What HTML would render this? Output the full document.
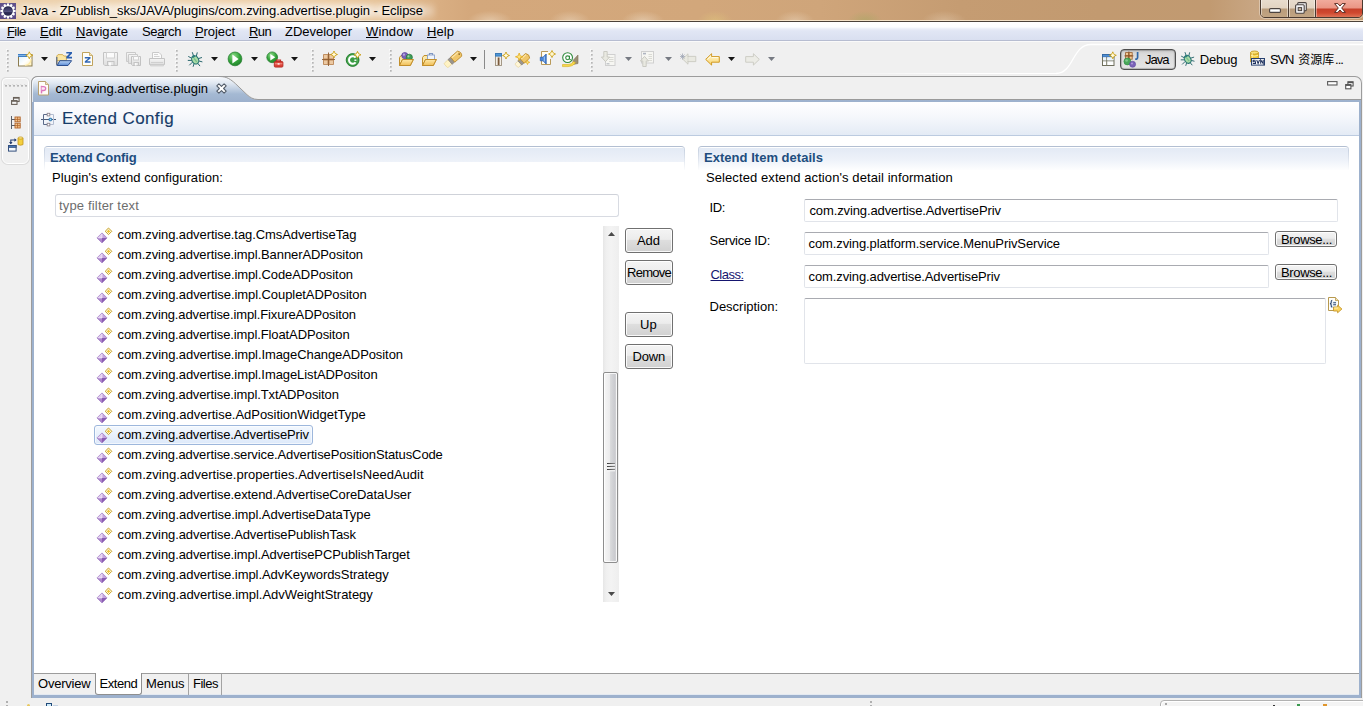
<!DOCTYPE html>
<html>
<head>
<meta charset="utf-8">
<title>Eclipse</title>
<style>
*{box-sizing:border-box;margin:0;padding:0}
html,body{width:1363px;height:706px;overflow:hidden;background:#f0f0f0}
body{position:relative;font-family:"Liberation Sans",sans-serif;font-size:13px;color:#000;line-height:16px}
.a{position:absolute}
svg{overflow:visible}
.t{position:absolute;white-space:nowrap;line-height:16px;height:16px}
u{text-decoration:underline;text-underline-offset:1px}
.dd{position:absolute;width:0;height:0;border-left:4px solid transparent;border-right:4px solid transparent;border-top:4px solid #111;top:57px}
.dd.g{border-top-color:#70727a}
.grip{position:absolute;top:49px;width:2px;height:21px;background:repeating-linear-gradient(180deg,#a9a9a9 0,#a9a9a9 2px,transparent 2px,transparent 4px)}
.sec{position:absolute;height:24px;border-radius:4px 4px 0 0;border-top:1px solid #b3bfd2;overflow:hidden}
.sec i{position:absolute;top:0;width:1px;height:24px;background:linear-gradient(180deg,#c3cede 0,#d9e0eb 10px,#ffffff 24px)}
.sec b{position:absolute;left:1px;right:1px;top:1px}
.inp{position:absolute;background:#fff;border:1px solid #d8dbe2;border-top-color:#cfd2d9;border-radius:3px}
.inp2{position:absolute;background:#fff;border:1px solid #e1e4ea;border-top-color:#a9abb1;border-radius:2px}
.btn{position:absolute;border:1px solid #707070;border-radius:3px;background:linear-gradient(180deg,#f4f4f4 0,#ececec 45%,#dedede 50%,#d1d1d1 100%);box-shadow:inset 0 0 0 1px rgba(255,255,255,.85)}
</style>
</head>
<body>
<svg width="0" height="0" style="position:absolute"><defs>
<linearGradient id="pg" x1="0" y1="0" x2="1" y2="1"><stop offset="0" stop-color="#ead9f4"/><stop offset=".5" stop-color="#b88fd2"/><stop offset="1" stop-color="#8a5cb2"/></linearGradient>
<g id="ext"><path d="M6 5.9 L1 10.9 H6Z" fill="#e2cdf1"/><path d="M6 5.9 L11 10.9 H6Z" fill="#c6a3df"/><path d="M1 10.9 L6 15.9 V10.9Z" fill="#ad85cd"/><path d="M11 10.9 L6 15.9 V10.9Z" fill="#8c5fb4"/><path d="M6 5.9 L11 10.9 L6 15.9 L1 10.9 Z" fill="none" stroke="#9b76be" stroke-width=".7" stroke-linejoin="round"/><path d="M6 7 V10.9 H2.4" stroke="#f6eefb" stroke-width=".8" fill="none" opacity=".85"/>
<path d="M12.5 1 L15.8 4.3 L12.5 7.6 L9.2 4.3 Z" fill="#fffbe2" stroke="#c6a028" stroke-width="1" stroke-linejoin="round"/><path d="M12.5 2.7 V5.9 M10.9 4.3 H14.1" stroke="#eec43a" stroke-width="1.2"/></g>
<linearGradient id="gY" x1="0" y1="0" x2="0" y2="1"><stop offset="0" stop-color="#fff3c4"/><stop offset="1" stop-color="#f1c860"/></linearGradient>
<linearGradient id="gFold" x1="0" y1="0" x2="0" y2="1"><stop offset="0" stop-color="#fde9a9"/><stop offset="1" stop-color="#f0bd55"/></linearGradient>
<radialGradient id="gRun" cx=".4" cy=".3" r=".8"><stop offset="0" stop-color="#8fdc8a"/><stop offset=".55" stop-color="#33a33a"/><stop offset="1" stop-color="#1d7a27"/></radialGradient>
<linearGradient id="gDis" x1="0" y1="0" x2="0" y2="1"><stop offset="0" stop-color="#f6f6f6"/><stop offset="1" stop-color="#dedede"/></linearGradient>
<linearGradient id="gBack" x1="0" y1="0" x2="0" y2="1"><stop offset="0" stop-color="#fff9dc"/><stop offset="1" stop-color="#fbd467"/></linearGradient>
<g id="star"><path d="M3.5 0 Q4 2.4 4.9 2.1 Q4.6 3 7 3.5 Q4.6 4 4.9 4.9 Q4 4.6 3.5 7 Q3 4.6 2.1 4.9 Q2.4 4 0 3.5 Q2.4 3 2.1 2.1 Q3 2.4 3.5 0 Z" fill="#ffe680" stroke="#c99f1c" stroke-width=".9" stroke-linejoin="round"/><path d="M3.5 1.7 V5.3 M1.7 3.5 H5.3" stroke="#fffdf0" stroke-width=".9"/></g>
<g id="ofold"><path d="M1.5 13.5 V5.5 L3 3.5 H6.5 L7.5 5 H12.5 V7.5" fill="#fbe7a6" stroke="#c28f2c" stroke-width="1" stroke-linejoin="round"/><path d="M1.5 13.5 L4.5 7.5 H15.3 L12.3 13.5 Z" fill="url(#gFold)" stroke="#c28f2c" stroke-width="1" stroke-linejoin="round"/></g>
</defs></svg>
<div class="a" id="title" style="left:0px;top:0px;width:1363px;height:22px;background:linear-gradient(90deg,#ecd0ab 0px,#edd0aa 200px,#ebcaa0 330px,#e3bd90 400px,#d9ae82 440px,#d4a87c 470px,#d2a77b 700px,#cfa57a 820px,#c59c72 960px,#c29a70 1100px,#c19a71 1210px,#c8a683 1255px,#c59c72 1363px)"></div>
<div class="a" style="left:468px;top:11px;width:44px;height:10px;background:radial-gradient(ellipse at 50% 100%,rgba(236,216,192,.6) 0,rgba(255,255,255,0) 72%)"></div>
<div class="a" style="left:550px;top:11px;width:40px;height:10px;background:radial-gradient(ellipse at 50% 100%,rgba(234,214,190,.55) 0,rgba(255,255,255,0) 72%)"></div>
<div class="a" style="left:622px;top:11px;width:42px;height:10px;background:radial-gradient(ellipse at 50% 100%,rgba(234,214,190,.6) 0,rgba(255,255,255,0) 72%)"></div>
<div class="a" style="left:698px;top:11px;width:34px;height:10px;background:radial-gradient(ellipse at 50% 100%,rgba(228,208,124,.4) 0,rgba(255,255,255,0) 72%)"></div>
<div class="a" style="left:776px;top:11px;width:38px;height:10px;background:radial-gradient(ellipse at 50% 100%,rgba(234,214,190,.5) 0,rgba(255,255,255,0) 72%)"></div>
<div class="a" style="left:848px;top:11px;width:34px;height:10px;background:radial-gradient(ellipse at 50% 100%,rgba(150,170,90,.4) 0,rgba(255,255,255,0) 72%)"></div>
<div class="a" style="left:922px;top:11px;width:44px;height:10px;background:radial-gradient(ellipse at 50% 100%,rgba(232,212,188,.4) 0,rgba(255,255,255,0) 72%)"></div>
<div class="a" style="left:14px;top:3px;width:420px;height:16px;background:radial-gradient(ellipse at 50% 50%,rgba(255,255,255,.75) 0,rgba(255,255,255,.55) 55%,rgba(255,255,255,0) 100%);filter:blur(3px)"></div>
<div class="a" style="left:0px;top:20px;width:1363px;height:1px;background:rgba(250,236,214,.85)"></div>
<div class="a" style="left:0px;top:21px;width:1363px;height:1px;background:#4b423a"></div>
<div class="t" style="left:21px;top:3px;letter-spacing:-0.053px;text-shadow:0 0 5px #fff,0 0 9px rgba(255,255,255,.9)">Java - ZPublish_sks/JAVA/plugins/com.zving.advertise.plugin - Eclipse</div>
<svg class="a" style="left:0px;top:3px" width="16" height="16" viewBox="0 0 16 16"><rect width="16" height="16" fill="#5a4a86"/><rect width="16" height="8" fill="#66568f" opacity=".6"/><g fill="#fff"><circle cx="8" cy="8" r="6"/><rect x="6.9" y="0.4" width="2.2" height="3" transform="rotate(0 8 8)"/><rect x="6.9" y="0.4" width="2.2" height="3" transform="rotate(30 8 8)"/><rect x="6.9" y="0.4" width="2.2" height="3" transform="rotate(60 8 8)"/><rect x="6.9" y="0.4" width="2.2" height="3" transform="rotate(90 8 8)"/><rect x="6.9" y="0.4" width="2.2" height="3" transform="rotate(120 8 8)"/><rect x="6.9" y="0.4" width="2.2" height="3" transform="rotate(150 8 8)"/><rect x="6.9" y="0.4" width="2.2" height="3" transform="rotate(180 8 8)"/><rect x="6.9" y="0.4" width="2.2" height="3" transform="rotate(210 8 8)"/><rect x="6.9" y="0.4" width="2.2" height="3" transform="rotate(240 8 8)"/><rect x="6.9" y="0.4" width="2.2" height="3" transform="rotate(270 8 8)"/><rect x="6.9" y="0.4" width="2.2" height="3" transform="rotate(300 8 8)"/><rect x="6.9" y="0.4" width="2.2" height="3" transform="rotate(330 8 8)"/></g><circle cx="8" cy="8" r="4.8" fill="#2b2a52"/><path d="M3.9 7.2 H12.1 M3.8 8.6 H12.2" stroke="#6c6a9a" stroke-width=".9" opacity=".8"/><ellipse cx="8" cy="6" rx="3.2" ry="1.6" fill="#4a4878" opacity=".5"/></svg>
<div class="a" style="left:1260px;top:-4px;width:103px;height:22px;border:1px solid #4a3a30;border-radius:0 0 5px 5px;overflow:hidden;box-shadow:0 0 0 1px rgba(255,255,255,.35)"><div class="a" style="left:0;top:0;width:27px;height:22px;background:linear-gradient(180deg,#eadfd2 0,#e2d3c1 11px,#b89b7b 12px,#c2a583 20px);box-shadow:inset 0 0 0 1px rgba(255,255,255,.45)"></div><div class="a" style="left:27px;top:0;width:27px;height:22px;border-left:1px solid #4a3a30;background:linear-gradient(180deg,#eadfd2 0,#e2d3c1 11px,#b89b7b 12px,#c2a583 20px);box-shadow:inset 0 0 0 1px rgba(255,255,255,.45)"></div><div class="a" style="left:54px;top:0;width:49px;height:22px;border-left:1px solid #4a3a30;background:linear-gradient(180deg,#f3b3a5 0,#ea9584 11px,#c6402a 12px,#d0492f 16px,#e27c5e 21px);box-shadow:inset 0 0 0 1px rgba(255,255,255,.4)"></div></div>
<svg class="a" style="left:1269px;top:8px" width="12" height="5" viewBox="0 0 12 5"><rect x="0.6" y="0.6" width="10.8" height="3.8" rx="1" fill="#fff" stroke="#4b4340" stroke-width="1.1"/></svg>
<svg class="a" style="left:1295px;top:2px" width="12" height="12" viewBox="0 0 12 12"><rect x="2.7" y="0.6" width="8.6" height="8.2" rx="1" fill="#f4f4f6" stroke="#4b4340" stroke-width="1.1"/><rect x="0.6" y="2.8" width="8.6" height="8.4" rx="1" fill="#f4f4f6" stroke="#4b4340" stroke-width="1.1"/><rect x="3.2" y="5.6" width="3.4" height="3" fill="#c9b8a3" stroke="#4b4340" stroke-width="1"/></svg>
<svg class="a" style="left:1334px;top:3px" width="12" height="10" viewBox="0 0 12 10"><path d="M0.6 0.6 H3.9 L6 3 L8.1 0.6 H11.4 L7.7 5 L11.4 9.4 H8.1 L6 7 L3.9 9.4 H0.6 L4.3 5 Z" fill="#fff" stroke="#5a2b22" stroke-width="1" stroke-linejoin="round"/></svg>
<div class="a" style="left:0px;top:22px;width:1363px;height:18px;background:linear-gradient(180deg,#ffffff 0,#fcfdff 5px,#e9edf8 7px,#e1e6f4 9px,#d9dff0 18px)"></div>
<div class="a" style="left:0px;top:40px;width:1363px;height:1px;background:#b7bdd1"></div>
<div class="a" style="left:0px;top:41px;width:1363px;height:1px;background:#fafafa"></div>
<div class="t" style="left:7px;top:24px;letter-spacing:-0.588px;"><u>F</u>ile</div>
<div class="t" style="left:40px;top:24px;letter-spacing:-0.102px;"><u>E</u>dit</div>
<div class="t" style="left:76px;top:24px;letter-spacing:0.084px;"><u>N</u>avigate</div>
<div class="t" style="left:142px;top:24px;letter-spacing:-0.367px;">Se<u>a</u>rch</div>
<div class="t" style="left:195px;top:24px;letter-spacing:-0.067px;"><u>P</u>roject</div>
<div class="t" style="left:249px;top:24px;letter-spacing:-0.620px;"><u>R</u>un</div>
<div class="t" style="left:285px;top:24px;letter-spacing:-0.022px;">ZDeveloper</div>
<div class="t" style="left:366px;top:24px;letter-spacing:0.125px;"><u>W</u>indow</div>
<div class="t" style="left:427px;top:24px;letter-spacing:0.062px;"><u>H</u>elp</div>
<svg class="a" style="left:6px;top:49px" width="3" height="22" viewBox="0 0 3 22"><rect x="0" y="0" width="1.6" height="1.6" fill="#fbfbfb"/><rect x="1" y="1" width="1.7" height="1.7" fill="#b6b6b6"/><rect x="0" y="4" width="1.6" height="1.6" fill="#fbfbfb"/><rect x="1" y="5" width="1.7" height="1.7" fill="#b6b6b6"/><rect x="0" y="8" width="1.6" height="1.6" fill="#fbfbfb"/><rect x="1" y="9" width="1.7" height="1.7" fill="#b6b6b6"/><rect x="0" y="12" width="1.6" height="1.6" fill="#fbfbfb"/><rect x="1" y="13" width="1.7" height="1.7" fill="#b6b6b6"/><rect x="0" y="16" width="1.6" height="1.6" fill="#fbfbfb"/><rect x="1" y="17" width="1.7" height="1.7" fill="#b6b6b6"/><rect x="0" y="20" width="1.6" height="1.6" fill="#fbfbfb"/><rect x="1" y="21" width="1.7" height="1.7" fill="#b6b6b6"/></svg>
<svg class="a" style="left:18px;top:51px" width="16" height="16" viewBox="0 0 16 16"><defs><linearGradient id="gNew" x1="0" y1="0" x2="1" y2="1"><stop offset="0" stop-color="#d9f0fb"/><stop offset=".55" stop-color="#ffffff"/><stop offset="1" stop-color="#fff0b8"/></linearGradient></defs><rect x="0.5" y="3.5" width="13.5" height="11.5" fill="url(#gNew)" stroke="#8c7c50"/><rect x="0" y="3" width="9" height="3" fill="#3f7fc6"/><path d="M0 4.5 H8.5" stroke="#8fc0ee" stroke-width=".8"/><path d="M13 8 Q13 13.5 7 14.5" fill="none" stroke="#ffe9a0" stroke-width="1.2" opacity=".9"/><use href="#star" x="7.8" y="0.8"/></svg>
<svg class="a" style="left:41px;top:57px" width="7" height="4" viewBox="0 0 7 4"><path d="M0 0 H7 L3.5 4 Z" fill="#151515"/></svg>
<svg class="a" style="left:56px;top:52px" width="17" height="15" viewBox="0 0 17 15"><defs><linearGradient id="gFz" x1="0" y1="0" x2="0" y2="1"><stop offset="0" stop-color="#bcd6f6"/><stop offset="1" stop-color="#5a8bd4"/></linearGradient></defs><path d="M0.8 12.5 V4 L2 2.6 H6.6 L7.8 4 H10.4 V8.6 H0.8 Z" fill="#fbe6a2" stroke="#c9a03c" stroke-width=".8" stroke-linejoin="round"/><path d="M1.2 13.5 L3.8 8.7 H15.6 L12 13.5 Z" fill="url(#gFz)" stroke="#2c4f8f" stroke-width="1" stroke-linejoin="round"/><path d="M0.8 5 V13.4" stroke="#2c4f8f" stroke-width=".9"/><path d="M10.3 0 H16 V1.6 L12.8 4.8 H16 V6.4 H10.3 V4.8 L13.5 1.6 H10.3 Z" fill="#2a5fb0"/></svg>
<svg class="a" style="left:82px;top:52px" width="12" height="15" viewBox="0 0 12 15"><path d="M0.5 0.5 H7.5 L10.5 3.5 V13.5 H0.5 Z" fill="#fffef8" stroke="#c0a35c"/><path d="M7.5 0.5 V3.5 H10.5" fill="#f3e3b4" stroke="#c0a35c" stroke-width=".8"/><path d="M2.8 5 H8.5 V6.4 L5 9.3 H8.5 V10.7 H2.8 V9.3 L6.3 6.4 H2.8 Z" fill="#2f66b5"/></svg>
<svg class="a" style="left:103px;top:52px" width="16" height="15" viewBox="0 0 16 15"><path d="M0.5 0.5 H14.5 V13.5 H1.8 L0.5 12.2 Z" fill="url(#gDis)" stroke="#c4c4c4"/><rect x="3.5" y="0.5" width="8" height="5.5" fill="#fbfbfb" stroke="#d0d0d0"/><rect x="4.5" y="9.5" width="6.5" height="4" fill="#e8e8e8" stroke="#c4c4c4"/><rect x="6" y="10.5" width="2" height="3" fill="#fbfbfb"/></svg>
<svg class="a" style="left:126px;top:52px" width="16" height="15" viewBox="0 0 16 15"><path d="M0.5 0.5 H9.5 V9.5 H0.5 Z" fill="url(#gDis)" stroke="#cacaca"/><path d="M2.5 2.5 H11.5 V11.5 H2.5 Z" fill="url(#gDis)" stroke="#cacaca"/><path d="M5.5 4.5 H14.5 V13.5 H6.5 L5.5 12.5 Z" fill="url(#gDis)" stroke="#c2c2c2"/><rect x="7.5" y="4.5" width="5" height="3.5" fill="#fbfbfb" stroke="#d0d0d0"/><rect x="8" y="10.5" width="4.5" height="3" fill="#e6e6e6" stroke="#c4c4c4"/><rect x="9" y="11" width="1.5" height="2.5" fill="#fbfbfb"/></svg>
<svg class="a" style="left:149px;top:52px" width="16" height="15" viewBox="0 0 16 15"><path d="M3.5 6 V0.5 H10 L12.5 3 V6" fill="#fbfbfb" stroke="#cacaca"/><path d="M5 2.5 H9 M5 4.5 H10.5" stroke="#d2d2d2"/><path d="M0.5 6.5 H15.5 V12.5 H0.5 Z" fill="url(#gDis)" stroke="#c4c4c4"/><path d="M1.5 12.5 H14.5 V14 H1.5 Z" fill="#dcdcdc" stroke="#cacaca" stroke-width=".6"/><path d="M2 10.5 H14" stroke="#d0d0d0"/></svg>
<svg class="a" style="left:175px;top:49px" width="3" height="22" viewBox="0 0 3 22"><rect x="0" y="0" width="1.6" height="1.6" fill="#fbfbfb"/><rect x="1" y="1" width="1.7" height="1.7" fill="#b6b6b6"/><rect x="0" y="4" width="1.6" height="1.6" fill="#fbfbfb"/><rect x="1" y="5" width="1.7" height="1.7" fill="#b6b6b6"/><rect x="0" y="8" width="1.6" height="1.6" fill="#fbfbfb"/><rect x="1" y="9" width="1.7" height="1.7" fill="#b6b6b6"/><rect x="0" y="12" width="1.6" height="1.6" fill="#fbfbfb"/><rect x="1" y="13" width="1.7" height="1.7" fill="#b6b6b6"/><rect x="0" y="16" width="1.6" height="1.6" fill="#fbfbfb"/><rect x="1" y="17" width="1.7" height="1.7" fill="#b6b6b6"/><rect x="0" y="20" width="1.6" height="1.6" fill="#fbfbfb"/><rect x="1" y="21" width="1.7" height="1.7" fill="#b6b6b6"/></svg>
<svg class="a" style="left:187px;top:51px" width="16" height="16" viewBox="0 0 16 16"><g stroke="#1f5f66" stroke-width=".95" fill="none" stroke-linecap="round"><path d="M5.4 1.6 L6.6 5"/><path d="M10.2 1.8 L9.4 5"/><path d="M1.6 5.6 L5 7.4"/><path d="M1.2 9.4 H4.6"/><path d="M2.6 14 L5.2 11.4"/><path d="M14.6 6.6 L11.4 7.6"/><path d="M15 10.8 L12 10"/><path d="M12.8 14.8 L10.6 12.2"/><path d="M6.2 15.4 L7 12.8"/></g><ellipse cx="8.2" cy="8.9" rx="3.3" ry="4.3" transform="rotate(-28 8.2 8.9)" fill="#a9dca6" stroke="#2a7674" stroke-width="1.1"/><path d="M6.9 7.4 L9.8 10.8" stroke="#74bd8c" stroke-width="1.2"/><ellipse cx="6.5" cy="5.5" rx="1.7" ry="1.2" transform="rotate(-28 6.5 5.5)" fill="#2f7f7c"/></svg>
<svg class="a" style="left:211px;top:57px" width="7" height="4" viewBox="0 0 7 4"><path d="M0 0 H7 L3.5 4 Z" fill="#151515"/></svg>
<svg class="a" style="left:227px;top:51px" width="16" height="16" viewBox="0 0 16 16"><circle cx="8" cy="7.9" r="6.9" fill="url(#gRun)" stroke="#1f7a2a" stroke-width=".7"/><path d="M5.4 3.4 L11.6 7.9 L5.4 12.4 Z" fill="#fff"/></svg>
<svg class="a" style="left:251px;top:57px" width="7" height="4" viewBox="0 0 7 4"><path d="M0 0 H7 L3.5 4 Z" fill="#151515"/></svg>
<svg class="a" style="left:266px;top:52px" width="18" height="16" viewBox="0 0 18 16"><circle cx="6.2" cy="5.3" r="5.4" fill="url(#gRun)" stroke="#1f7a2a" stroke-width=".7"/><path d="M4.3 2 L9.3 5.3 L4.3 8.6 Z" fill="#fff"/><path d="M10.5 9.2 V8.2 H14.5 V9.2" fill="none" stroke="#c0302a" stroke-width="1.2"/><rect x="8.3" y="9.5" width="8.6" height="5.6" rx="1" fill="#dc4438" stroke="#b3271f" stroke-width=".9"/><path d="M8.8 11.8 H16.4" stroke="#f7a39b" stroke-width=".9"/><rect x="11.6" y="11" width="2" height="1.8" fill="#ffd9d4"/></svg>
<svg class="a" style="left:291px;top:57px" width="7" height="4" viewBox="0 0 7 4"><path d="M0 0 H7 L3.5 4 Z" fill="#151515"/></svg>
<svg class="a" style="left:311px;top:49px" width="3" height="22" viewBox="0 0 3 22"><rect x="0" y="0" width="1.6" height="1.6" fill="#fbfbfb"/><rect x="1" y="1" width="1.7" height="1.7" fill="#b6b6b6"/><rect x="0" y="4" width="1.6" height="1.6" fill="#fbfbfb"/><rect x="1" y="5" width="1.7" height="1.7" fill="#b6b6b6"/><rect x="0" y="8" width="1.6" height="1.6" fill="#fbfbfb"/><rect x="1" y="9" width="1.7" height="1.7" fill="#b6b6b6"/><rect x="0" y="12" width="1.6" height="1.6" fill="#fbfbfb"/><rect x="1" y="13" width="1.7" height="1.7" fill="#b6b6b6"/><rect x="0" y="16" width="1.6" height="1.6" fill="#fbfbfb"/><rect x="1" y="17" width="1.7" height="1.7" fill="#b6b6b6"/><rect x="0" y="20" width="1.6" height="1.6" fill="#fbfbfb"/><rect x="1" y="21" width="1.7" height="1.7" fill="#b6b6b6"/></svg>
<svg class="a" style="left:322px;top:51px" width="16" height="16" viewBox="0 0 16 16"><g fill="#ecc9a2" stroke="#b57c48" stroke-width=".8"><rect x="1.6" y="3.6" width="4.4" height="4.4"/><rect x="7" y="3.6" width="4.4" height="4.4"/><rect x="1.6" y="9" width="4.4" height="4.4"/><rect x="7" y="9" width="4.4" height="4.4"/></g><path d="M6.5 1.5 V15 M0 8.5 H13" stroke="#8f5a2c" stroke-width=".9"/><use href="#star" x="8.5" y="0"/></svg>
<svg class="a" style="left:345px;top:51px" width="16" height="16" viewBox="0 0 16 16"><circle cx="7.6" cy="9" r="6.4" fill="#3b9c44" stroke="#1f7a2a" stroke-width=".9"/><circle cx="7.6" cy="9" r="5" fill="none" stroke="#5cb562" stroke-width=".8" opacity=".7"/><path d="M10.6 6.7 A3.7 3.7 0 1 0 10.6 11.3" fill="none" stroke="#fff" stroke-width="2"/><path d="M9.4 9.2 H11.4" stroke="#fff" stroke-width="1.4"/><use href="#star" x="9" y="0.3"/></svg>
<svg class="a" style="left:369px;top:57px" width="7" height="4" viewBox="0 0 7 4"><path d="M0 0 H7 L3.5 4 Z" fill="#151515"/></svg>
<svg class="a" style="left:389px;top:49px" width="3" height="22" viewBox="0 0 3 22"><rect x="0" y="0" width="1.6" height="1.6" fill="#fbfbfb"/><rect x="1" y="1" width="1.7" height="1.7" fill="#b6b6b6"/><rect x="0" y="4" width="1.6" height="1.6" fill="#fbfbfb"/><rect x="1" y="5" width="1.7" height="1.7" fill="#b6b6b6"/><rect x="0" y="8" width="1.6" height="1.6" fill="#fbfbfb"/><rect x="1" y="9" width="1.7" height="1.7" fill="#b6b6b6"/><rect x="0" y="12" width="1.6" height="1.6" fill="#fbfbfb"/><rect x="1" y="13" width="1.7" height="1.7" fill="#b6b6b6"/><rect x="0" y="16" width="1.6" height="1.6" fill="#fbfbfb"/><rect x="1" y="17" width="1.7" height="1.7" fill="#b6b6b6"/><rect x="0" y="20" width="1.6" height="1.6" fill="#fbfbfb"/><rect x="1" y="21" width="1.7" height="1.7" fill="#b6b6b6"/></svg>
<svg class="a" style="left:398px;top:52px" width="17" height="15" viewBox="0 0 17 15"><use href="#ofold"/><circle cx="6.8" cy="3.6" r="3.1" fill="#7a63b8" stroke="#54409a" stroke-width=".7"/><circle cx="5.9" cy="2.7" r="1.1" fill="#b9a9e0"/><circle cx="11.3" cy="5.3" r="3.1" fill="#3f9d58" stroke="#247538" stroke-width=".7"/><circle cx="10.4" cy="4.4" r="1.1" fill="#9ad6a6"/><path d="M1.5 13.5 L4.5 7.5 H15.3 L12.3 13.5 Z" fill="url(#gFold)" stroke="#c28f2c" stroke-linejoin="round"/></svg>
<svg class="a" style="left:421px;top:52px" width="17" height="15" viewBox="0 0 17 15"><use href="#ofold"/><rect x="6.5" y="3" width="7" height="6" fill="#eef3fb" stroke="#8aa0c8" stroke-width=".9"/><path d="M8.5 3 V1.5 H11.5 V3" fill="none" stroke="#7f97c4" stroke-width="1.2"/><path d="M1.5 13.5 L4.5 7.5 H15.3 L12.3 13.5 Z" fill="url(#gFold)" stroke="#c28f2c" stroke-linejoin="round"/></svg>
<svg class="a" style="left:446px;top:51px" width="16" height="15" viewBox="0 0 16 15"><g transform="rotate(-41 8 7.5)"><rect x="-3" y="4.6" width="6" height="5.8" rx="1.2" fill="#fff3c4" stroke="#e6d08e" stroke-width=".6"/><rect x="2.8" y="4.4" width="3.4" height="6.2" fill="#9a958f" stroke="#7b766f" stroke-width=".6"/><path d="M6.2 4.2 H15.4 Q18.4 7.5 15.4 10.8 H6.2 Z" fill="#f0c66a" stroke="#b98a2e" stroke-width=".8"/><path d="M7 5.5 H15" stroke="#fbe6ae" stroke-width="1.2"/><circle cx="14.8" cy="7.5" r=".8" fill="#7a5a1e"/></g></svg>
<svg class="a" style="left:470px;top:57px" width="7" height="4" viewBox="0 0 7 4"><path d="M0 0 H7 L3.5 4 Z" fill="#151515"/></svg>
<svg class="a" style="left:495px;top:52px" width="15" height="15" viewBox="0 0 15 15"><rect x="0.5" y="1.5" width="6" height="12" fill="#f4efe6" stroke="#9c8f7c" stroke-width=".9"/><rect x="0.5" y="1.5" width="6" height="2.6" fill="#4e96d6" stroke="#3578b8" stroke-width=".9"/><rect x="2.7" y="5.5" width="1.8" height="7.5" fill="#7b5a3c"/><use href="#star" x="7.5" y="0"/></svg>
<svg class="a" style="left:515px;top:52px" width="17" height="15" viewBox="0 0 17 15"><g transform="rotate(-42 8.5 7.5)"><rect x="-1" y="5" width="4.5" height="5" rx="1" fill="#fff6d6" stroke="#e2cf9a" stroke-width=".6"/><rect x="3.5" y="4.6" width="3" height="5.8" fill="#9b9690" stroke="#7b766f" stroke-width=".6"/><path d="M6.5 4.4 H14 Q16.6 7.5 14 10.6 H6.5 Z" fill="#f0c66a" stroke="#b98a2e" stroke-width=".8"/><path d="M7.3 5.6 H13.6" stroke="#fbe6ae" stroke-width="1.2"/></g><path d="M4.2 1 L5.2 3.8 L8 4.8 L5.2 5.8 L4.2 8.6 L3.2 5.8 L0.4 4.8 L3.2 3.8 Z" fill="#ffe680" stroke="#e2aa1c" stroke-width=".8"/><path d="M12.5 8 L13.1 9.7 L14.8 10.3 L13.1 10.9 L12.5 12.6 L11.9 10.9 L10.2 10.3 L11.9 9.7 Z" fill="#ffe680" stroke="#e2aa1c" stroke-width=".7"/></svg>
<svg class="a" style="left:540px;top:51px" width="16" height="15" viewBox="0 0 16 15"><path d="M1.5 0.5 H8 M1.5 0.5 V13.5 H10.5 V8" fill="none" stroke="#b99a5a" stroke-width="1"/><rect x="2" y="1" width="8" height="12" fill="#fffdf4"/><path d="M0.3 6.2 H3 L6.2 3 V13 L3 9.8 H0.3 Z" fill="#4a86d8" stroke="#2a5fb0" stroke-width=".8" stroke-linejoin="round"/><path d="M4.3 5.5 V10.5" stroke="#a9c9f4" stroke-width="1"/><use href="#star" x="8.5" y="-0.5"/></svg>
<svg class="a" style="left:562px;top:52px" width="17" height="15" viewBox="0 0 17 15"><path d="M11 8.5 L16 3 V11.5 L11 12.5 Z" fill="#9a8f74" stroke="#7f7458" stroke-width=".6"/><path d="M0.5 12.5 H6 Q10 12.5 11.5 9.5 L13.5 10.8 Q11 14.6 6 14.6 H0.5 Z" fill="#f6d84c" stroke="#d9ae1e" stroke-width=".6"/><circle cx="5.6" cy="5.6" r="4.9" fill="#fff" stroke="#2f8a3c" stroke-width="1.1"/><circle cx="5.6" cy="5.8" r="1.9" fill="none" stroke="#2f8a3c" stroke-width="1.1"/><path d="M7.5 3.8 V7 Q7.6 8 8.8 7.6" fill="none" stroke="#2f8a3c" stroke-width="1"/></svg>
<svg class="a" style="left:590px;top:49px" width="3" height="22" viewBox="0 0 3 22"><rect x="0" y="0" width="1.6" height="1.6" fill="#fbfbfb"/><rect x="1" y="1" width="1.7" height="1.7" fill="#b6b6b6"/><rect x="0" y="4" width="1.6" height="1.6" fill="#fbfbfb"/><rect x="1" y="5" width="1.7" height="1.7" fill="#b6b6b6"/><rect x="0" y="8" width="1.6" height="1.6" fill="#fbfbfb"/><rect x="1" y="9" width="1.7" height="1.7" fill="#b6b6b6"/><rect x="0" y="12" width="1.6" height="1.6" fill="#fbfbfb"/><rect x="1" y="13" width="1.7" height="1.7" fill="#b6b6b6"/><rect x="0" y="16" width="1.6" height="1.6" fill="#fbfbfb"/><rect x="1" y="17" width="1.7" height="1.7" fill="#b6b6b6"/><rect x="0" y="20" width="1.6" height="1.6" fill="#fbfbfb"/><rect x="1" y="21" width="1.7" height="1.7" fill="#b6b6b6"/></svg>
<svg class="a" style="left:601px;top:51px" width="15" height="15" viewBox="0 0 15 15"><rect x="4.5" y="3.5" width="9.5" height="11" fill="#f6f6f2" stroke="#d0d0d0"/><path d="M8 6.5 H12.5 M8 8.5 H12.5 M8 10.5 H12.5" stroke="#dadad4"/><rect x="5.5" y="12" width="3" height="1.5" fill="#c4c7cc"/><path d="M2.8 0.5 H6.2 V6 H8.6 L4.5 10.6 L0.4 6 H2.8 Z" fill="#e9e9e1" stroke="#c6c6be" stroke-width=".9" stroke-linejoin="round"/></svg>
<svg class="a" style="left:625px;top:57px" width="7" height="4" viewBox="0 0 7 4"><path d="M0 0 H7 L3.5 4 Z" fill="#767a82"/></svg>
<svg class="a" style="left:640px;top:51px" width="15" height="16" viewBox="0 0 15 16"><rect x="1.5" y="0.5" width="12" height="11.5" fill="#f6f6f2" stroke="#d0d0d0"/><rect x="3" y="1.8" width="3" height="1.6" fill="#aeb4c0"/><path d="M8.5 3.5 H12 M8.5 5.5 H12 M8.5 7.5 H12 M8.5 9.5 H12" stroke="#dadad4"/><path d="M2.8 15.5 H6.2 V10 H8.6 L4.5 5.4 L0.4 10 H2.8 Z" fill="#e9e9e1" stroke="#c6c6be" stroke-width=".9" stroke-linejoin="round"/></svg>
<svg class="a" style="left:665px;top:57px" width="7" height="4" viewBox="0 0 7 4"><path d="M0 0 H7 L3.5 4 Z" fill="#767a82"/></svg>
<svg class="a" style="left:680px;top:53px" width="17" height="12" viewBox="0 0 17 12"><path d="M8 0.8 V11.2 L2.6 6 Z M8 3.4 H15.8 V8.6 H8 Z" fill="#e9e9e1" stroke="#c9c9c1" stroke-width=".9" stroke-linejoin="round"/><path d="M8 3.9 V8.1" stroke="#e9e9e1" stroke-width="1.2"/><path d="M0.5 1.5 L4.5 5.5 M4.5 1.5 L0.5 5.5 M2.5 0.5 V6.5 M0 3.5 H5" stroke="#9aa0b0" stroke-width=".7"/></svg>
<svg class="a" style="left:705px;top:53px" width="15" height="13" viewBox="0 0 15 13"><path d="M6.6 0.7 V3.6 H14.3 V9.2 H6.6 V12.1 L0.7 6.4 Z" fill="url(#gBack)" stroke="#d19a24" stroke-width="1" stroke-linejoin="round"/><path d="M6 3 L2.4 6.4 M6.8 4.6 H13.2" stroke="#fffbe6" stroke-width="1" fill="none"/></svg>
<svg class="a" style="left:728px;top:57px" width="7" height="4" viewBox="0 0 7 4"><path d="M0 0 H7 L3.5 4 Z" fill="#151515"/></svg>
<svg class="a" style="left:745px;top:53px" width="15" height="13" viewBox="0 0 15 13"><path d="M8.4 0.7 V3.6 H0.7 V9.2 H8.4 V12.1 L14.3 6.4 Z" fill="#ecece6" stroke="#cdcdc5" stroke-width="1" stroke-linejoin="round"/></svg>
<svg class="a" style="left:768px;top:57px" width="7" height="4" viewBox="0 0 7 4"><path d="M0 0 H7 L3.5 4 Z" fill="#767a82"/></svg>
<div class="a" style="left:484px;top:50px;width:1px;height:19px;background:#8a8a8a"></div>
<svg class="a" style="left:780px;top:40px" width="583" height="38" viewBox="0 0 583 38"><defs><linearGradient id="pl" gradientUnits="userSpaceOnUse" x1="60" y1="0" x2="276" y2="0"><stop offset="0" stop-color="#fff" stop-opacity="0"/><stop offset=".6" stop-color="#fff" stop-opacity="1"/></linearGradient></defs><path d="M60 33.5 H276.5" stroke="url(#pl)" stroke-width="1.2" fill="none"/><path d="M276 33.5 C294 33.5 292 4.5 311 4.5 H583" stroke="#fff" stroke-width="1.3" fill="none"/></svg>
<svg class="a" style="left:1102px;top:52px" width="15" height="14" viewBox="0 0 15 14"><rect x="0.5" y="2.5" width="11.5" height="11" fill="#fdfefe" stroke="#6f6f5c"/><rect x="0.5" y="2.5" width="11.5" height="2.4" fill="#4f8fd4" stroke="#2f66a8" stroke-width=".8"/><path d="M4.7 5 V13.5 M0.5 8.8 H12" stroke="#7b7b68" stroke-width="1"/><path d="M1.2 5.4 H4.1 V8.2 H1.2Z M5.3 5.4 H11.4 V8.2 H5.3Z" fill="#e8f4fd"/><use href="#star" x="7.3" y="-0.2"/></svg>
<div class="a" id="javabtn" style="left:1120px;top:49px;width:56px;height:21px;border:1px solid #4e4e4e;border-radius:4px;background:linear-gradient(180deg,#c9c9c9 0,#dadada 4px,#e6e6e6 100%);box-shadow:inset 0 0 1px 0.5px rgba(60,60,60,.55)"></div>
<svg class="a" style="left:1123px;top:51px" width="17" height="17" viewBox="0 0 17 17"><g fill="#f3c997" stroke="#9a5f2d" stroke-width=".8"><rect x="2.6" y="1.6" width="3.2" height="3.2"/><rect x="6" y="1.6" width="3.2" height="3.2"/><rect x="2.6" y="5" width="3.2" height="3.2"/><rect x="6" y="5" width="3.2" height="3.2"/></g><path d="M5.9 0.4 V9 M1.4 4.9 H10.4" stroke="#8a5426" stroke-width=".8"/><circle cx="4.4" cy="10.4" r="3.5" fill="#4aa85a" stroke="#2d8a42" stroke-width=".6"/><circle cx="3.6" cy="9.5" r="1.3" fill="#8ed39a" opacity=".8"/><circle cx="9.6" cy="13.3" r="3" fill="#7a62b8" stroke="#5d479f" stroke-width=".6"/><circle cx="9" cy="12.5" r="1.1" fill="#b3a3dc" opacity=".8"/><path d="M14.6 1 V6.3 Q14.6 8.4 12.2 8.2" fill="none" stroke="#2e67a8" stroke-width="1.7"/></svg>
<div class="t" style="left:1145px;top:52px;letter-spacing:-0.992px;">Java</div>
<svg class="a" style="left:1180px;top:51px" width="16" height="16" viewBox="0 0 16 16"><g transform="scale(.94)"><g stroke="#1f5f66" stroke-width=".95" fill="none" stroke-linecap="round"><path d="M5.4 1.6 L6.6 5"/><path d="M10.2 1.8 L9.4 5"/><path d="M1.6 5.6 L5 7.4"/><path d="M1.2 9.4 H4.6"/><path d="M2.6 14 L5.2 11.4"/><path d="M14.6 6.6 L11.4 7.6"/><path d="M15 10.8 L12 10"/><path d="M12.8 14.8 L10.6 12.2"/><path d="M6.2 15.4 L7 12.8"/></g><ellipse cx="8.2" cy="8.9" rx="3.3" ry="4.3" transform="rotate(-28 8.2 8.9)" fill="#a9dca6" stroke="#2a7674" stroke-width="1.1"/><path d="M6.9 7.4 L9.8 10.8" stroke="#74bd8c" stroke-width="1.2"/><ellipse cx="6.5" cy="5.5" rx="1.7" ry="1.2" transform="rotate(-28 6.5 5.5)" fill="#2f7f7c"/></g></svg>
<div class="t" style="left:1199.8px;top:52px;letter-spacing:-0.166px;">Debug</div>
<svg class="a" style="left:1250px;top:50px" width="16" height="16" viewBox="0 0 16 16"><path d="M0.6 2.6 V12 Q4.5 13.6 8.4 12 V2.6" fill="#f3c936" stroke="#bd8f14" stroke-width=".8"/><ellipse cx="4.5" cy="2.6" rx="3.9" ry="1.6" fill="#fbe27a" stroke="#bd8f14" stroke-width=".8"/><path d="M1 5.4 Q4.5 7 8 5.4" fill="none" stroke="#fff0a8" stroke-width=".9"/><path d="M2.2 3 V11.5" stroke="#fff3b8" stroke-width="1" opacity=".8"/><rect x="1.5" y="8.5" width="13" height="6.6" fill="#fff" stroke="#27406f" stroke-width="1"/><g fill="none" stroke="#1c2f5c" stroke-width="1.05" stroke-linejoin="miter"><path d="M5.6 10.3 H3.1 V11.8 H5.5 V13.4 H2.8"/><path d="M6.7 9.9 L8.1 13.5 L9.5 9.9"/><path d="M10.7 13.8 V10 L13.2 13.6 V9.8"/></g></svg>
<div class="t" style="left:1270px;top:52px;letter-spacing:-1.145px;">SVN</div>
<svg class="a" style="left:1298px;top:52px" width="37" height="14" viewBox="0 0 37 14"><text x="0.2" y="11.7" font-size="12" fill="#000" font-family="'Liberation Sans','Noto Sans CJK SC',sans-serif">资源库</text></svg>
<div class="t" style="left:1335px;top:52px;letter-spacing:-0.943px;">...</div>
<div class="a" id="edframe" style="left:31px;top:76px;width:1331px;height:622px;border-radius:7px 7px 0 0;background:#f0f0f0;border:1px solid #9c9c9c;border-bottom:none"></div>
<div class="a" id="edblue" style="left:32px;top:100px;width:1329px;height:598px;background:#9db1cd"></div>
<div class="a" id="edwhite" style="left:34px;top:102px;width:1325px;height:571px;background:#fff"></div>
<div class="a" id="formhead" style="left:34px;top:102px;width:1325px;height:34px;background:linear-gradient(180deg,#ffffff 0,#f6f8fc 14px,#e4ebf5 33px)"></div>
<div class="a" style="left:34px;top:135px;width:1325px;height:1px;background:#bccbe0"></div>
<div class="a" id="tabsbar" style="left:34px;top:673px;width:1325px;height:22px;background:#f0f0f0;border-top:1px solid #9c9c9c;border-bottom:1px solid #e3e9f1"></div>
<svg class="a" style="left:31px;top:76px" width="1332" height="27" viewBox="0 0 1332 27"><defs><linearGradient id="tabg" x1="0" y1="0" x2="0" y2="1"><stop offset="0" stop-color="#f7f9fc"/><stop offset=".25" stop-color="#dfe7f1"/><stop offset=".68" stop-color="#a4b9d3"/><stop offset="1" stop-color="#9db1cd"/></linearGradient></defs><path d="M1 26 V7 Q1 1 7 1 H189 C196 1 200 4 204.3 7.8 L216 18.9 C219 21.5 222 23.5 227 23.5 H1330 V26 Z" fill="url(#tabg)"/><path d="M0.5 26 V7 Q0.5 0.5 7 0.5 H189 C196 0.5 200 3.7 204.3 7.5 L216 18.7 C219 21.3 222 23.5 227 23.5 H1331" fill="none" stroke="#9a9a9a" stroke-width="1"/><path d="M1.5 26 V7.5 Q1.5 1.5 7.5 1.5 H188" fill="none" stroke="#ffffff" stroke-width="1" opacity=".7"/></svg>
<svg class="a" style="left:38px;top:81px" width="12" height="15" viewBox="0 0 12 15"><path d="M0.5 0.5 H7.5 L10.5 3.5 V14 H0.5 Z" fill="#fffdf8" stroke="#b9a070" stroke-width="1"/><path d="M7.5 0.5 V3.5 H10.5" fill="#f2e4be" stroke="#b9a070" stroke-width=".8"/><path d="M3.5 4.8 V12.4" stroke="#dd78bd" stroke-width="1.5"/><path d="M3.6 5.7 H5.6 Q7.7 5.7 7.7 7.6 Q7.7 9.5 5.6 9.5 H3.6" fill="#fde9f6" stroke="#dd78bd" stroke-width="1.3"/></svg>
<svg class="a" style="left:216px;top:83px" width="11" height="11" viewBox="0 0 11 11"><path d="M0.8 2.9 L2.9 0.8 L5.5 3.4 L8.1 0.8 L10.2 2.9 L7.6 5.5 L10.2 8.1 L8.1 10.2 L5.5 7.6 L2.9 10.2 L0.8 8.1 L3.4 5.5 Z" fill="#fff" stroke="#525c69" stroke-width="1.1" stroke-linejoin="round"/></svg>
<svg class="a" style="left:1327px;top:81px" width="11" height="5" viewBox="0 0 11 5"><rect x="0.6" y="0.6" width="9.4" height="3.4" fill="#fff" stroke="#5a5a5a" stroke-width="1.1"/></svg>
<svg class="a" style="left:1345px;top:81px" width="10" height="9" viewBox="0 0 10 9"><rect x="2.9" y="0.8" width="5.2" height="4.2" fill="#fff" stroke="#555" stroke-width="1.1"/><path d="M2.9 1.4 H8.1" stroke="#555" stroke-width="1.6"/><rect x="0.7" y="3.6" width="5.2" height="4.2" fill="#fff" stroke="#555" stroke-width="1.1"/><path d="M0.7 4.2 H5.9" stroke="#555" stroke-width="1.4"/></svg>
<svg class="a" style="left:41px;top:113px" width="16" height="14" viewBox="0 0 16 14"><path d="M0 6.5 H15" stroke="#4c5b78" stroke-width="1"/><path d="M6 1.5 H2.5 V11.5 H6" fill="none" stroke="#5a6a8a" stroke-width="1"/><path d="M9 1.5 H12.5 V11.5 H9" fill="none" stroke="#b4bed2" stroke-width="1"/><rect x="6.2" y="0.3" width="2.6" height="2.6" fill="#fff" stroke="#8b8490" stroke-width=".9"/><rect x="6.2" y="10.3" width="2.6" height="2.6" fill="#fff" stroke="#8b8490" stroke-width=".9"/><path d="M7.6 6.5 L8.5 5 H10.3 L11.2 6.5 L10.3 8 H8.5 Z" fill="#3f8cc4" stroke="#2a6b9c" stroke-width=".5"/><circle cx="9.4" cy="6.5" r=".7" fill="#a8daf4"/></svg>
<div class="a" id="sidebar" style="left:2px;top:78px;width:27px;height:86px;border:1px solid #fff;border-radius:4px 4px 6px 6px;background:#f0f0f0;box-shadow:0 0 0 1px #dcdcdc"></div>
<svg class="a" style="left:4px;top:84px" width="24" height="3" viewBox="0 0 24 3"><rect x="1" y="1" width="2" height="1.6" fill="#b3b3b3"/><rect x="0" y="0" width="1.4" height="1.2" fill="#dedede"/><rect x="5" y="1" width="2" height="1.6" fill="#b3b3b3"/><rect x="4" y="0" width="1.4" height="1.2" fill="#dedede"/><rect x="9" y="1" width="2" height="1.6" fill="#b3b3b3"/><rect x="8" y="0" width="1.4" height="1.2" fill="#dedede"/><rect x="13" y="1" width="2" height="1.6" fill="#b3b3b3"/><rect x="12" y="0" width="1.4" height="1.2" fill="#dedede"/><rect x="17" y="1" width="2" height="1.6" fill="#b3b3b3"/><rect x="16" y="0" width="1.4" height="1.2" fill="#dedede"/><rect x="21" y="1" width="2" height="1.6" fill="#b3b3b3"/><rect x="20" y="0" width="1.4" height="1.2" fill="#dedede"/></svg>
<svg class="a" style="left:11px;top:97px" width="9" height="8" viewBox="0 0 9 8"><rect x="2.5" y="0.5" width="5.6" height="4" fill="#f3f3f3" stroke="#6a625a" stroke-width="1.1"/><path d="M2.5 1 H8.1" stroke="#6a625a" stroke-width="1.3"/><rect x="0.6" y="3.6" width="5.4" height="3.8" fill="#f6f6f6" stroke="#6a625a" stroke-width="1.1"/><path d="M0.6 4.1 H6" stroke="#6a625a" stroke-width="1.3"/></svg>
<svg class="a" style="left:11px;top:116px" width="10" height="13" viewBox="0 0 10 13"><path d="M0.5 0 V13 M0.5 3.5 H4 M0.5 9.5 H4" stroke="#5b5f68" stroke-width="1" fill="none"/><g fill="#f6c890" stroke="#b0632a" stroke-width=".9"><rect x="4" y="1" width="5.2" height="4.8"/><rect x="4" y="7.2" width="5.2" height="4.8"/></g><path d="M6.6 1 V5.8 M4 3.4 H9.2 M6.6 7.2 V12 M4 9.6 H9.2" stroke="#b0632a" stroke-width=".8"/></svg>
<svg class="a" style="left:8px;top:136px" width="16" height="16" viewBox="0 0 16 16"><path d="M10 2 V8.6 Q12.5 9.8 15 8.6 V2" fill="#f4cf3e" stroke="#c29316" stroke-width=".8"/><ellipse cx="12.5" cy="2" rx="2.5" ry="1.1" fill="#fce789" stroke="#c29316" stroke-width=".7"/><rect x="0.5" y="9.5" width="7.6" height="5.6" fill="#f5f9fd" stroke="#35507e" stroke-width="1"/><rect x="0.5" y="9.5" width="7.6" height="1.8" fill="#4d7fc2" stroke="#35507e" stroke-width="1"/><path d="M2.8 8 V4 H7.8" fill="none" stroke="#263f70" stroke-width="1.1"/><path d="M1 6 L2.8 8.3 L4.6 6 Z M6.4 2.2 L8.7 4 L6.4 5.8 Z" fill="#263f70"/></svg>
<div class="t" style="left:55.5px;top:81px;letter-spacing:-0.028px;">com.zving.advertise.plugin</div>
<div class="t" style="left:62px;top:109px;font-size:17px;letter-spacing:0.401px;line-height:20px;height:20px;color:#173c69;-webkit-text-stroke:.15px #173c69">Extend Config</div>
<div class="sec" style="left:44px;top:146px;width:641px"><b style="height:14px;background:linear-gradient(180deg,#e3eaf5 0,#eef2f9 14px)"></b><i style="left:0"></i><i style="right:0"></i></div>
<div class="t" style="left:50px;top:150px;font-weight:bold;letter-spacing:-0.123px;color:#214d7e">Extend Config</div>
<div class="t" style="left:52px;top:170px;letter-spacing:0.051px;">Plugin's extend configuration:</div>
<div class="inp" style="left:55px;top:194px;width:564px;height:23px"></div>
<div class="t" style="left:59px;top:198px;letter-spacing:0.168px;color:#6d6d6d">type filter text</div>
<div class="a" id="sel" style="left:94px;top:425px;width:219px;height:20px;border:1px solid #9db7dc;border-radius:3px;background:linear-gradient(180deg,#f3f8fe 0,#dde9fa 100%);box-shadow:inset 0 0 0 1px rgba(255,255,255,.6)"></div>
<svg class="a" style="left:96px;top:227px" width="17" height="17"><use href="#ext"/></svg>
<div class="t" style="left:117.5px;top:227px;letter-spacing:-0.082px;">com.zving.advertise.tag.CmsAdvertiseTag</div>
<svg class="a" style="left:96px;top:247px" width="17" height="17"><use href="#ext"/></svg>
<div class="t" style="left:117.5px;top:247px;letter-spacing:-0.096px;">com.zving.advertise.impl.BannerADPositon</div>
<svg class="a" style="left:96px;top:267px" width="17" height="17"><use href="#ext"/></svg>
<div class="t" style="left:117.5px;top:267px;letter-spacing:-0.079px;">com.zving.advertise.impl.CodeADPositon</div>
<svg class="a" style="left:96px;top:287px" width="17" height="17"><use href="#ext"/></svg>
<div class="t" style="left:117.5px;top:287px;letter-spacing:-0.076px;">com.zving.advertise.impl.CoupletADPositon</div>
<svg class="a" style="left:96px;top:307px" width="17" height="17"><use href="#ext"/></svg>
<div class="t" style="left:117.5px;top:307px;letter-spacing:-0.128px;">com.zving.advertise.impl.FixureADPositon</div>
<svg class="a" style="left:96px;top:327px" width="17" height="17"><use href="#ext"/></svg>
<div class="t" style="left:117.5px;top:327px;letter-spacing:-0.108px;">com.zving.advertise.impl.FloatADPositon</div>
<svg class="a" style="left:96px;top:347px" width="17" height="17"><use href="#ext"/></svg>
<div class="t" style="left:117.5px;top:347px;letter-spacing:-0.080px;">com.zving.advertise.impl.ImageChangeADPositon</div>
<svg class="a" style="left:96px;top:367px" width="17" height="17"><use href="#ext"/></svg>
<div class="t" style="left:117.5px;top:367px;letter-spacing:-0.083px;">com.zving.advertise.impl.ImageListADPositon</div>
<svg class="a" style="left:96px;top:387px" width="17" height="17"><use href="#ext"/></svg>
<div class="t" style="left:117.5px;top:387px;letter-spacing:-0.110px;">com.zving.advertise.impl.TxtADPositon</div>
<svg class="a" style="left:96px;top:407px" width="17" height="17"><use href="#ext"/></svg>
<div class="t" style="left:117.5px;top:407px;letter-spacing:-0.029px;">com.zving.advertise.AdPositionWidgetType</div>
<svg class="a" style="left:96px;top:427px" width="17" height="17"><use href="#ext"/></svg>
<div class="t" style="left:117.5px;top:427px;letter-spacing:-0.109px;">com.zving.advertise.AdvertisePriv</div>
<svg class="a" style="left:96px;top:447px" width="17" height="17"><use href="#ext"/></svg>
<div class="t" style="left:117.5px;top:447px;letter-spacing:-0.117px;">com.zving.advertise.service.AdvertisePositionStatusCode</div>
<svg class="a" style="left:96px;top:467px" width="17" height="17"><use href="#ext"/></svg>
<div class="t" style="left:117.5px;top:467px;letter-spacing:0.024px;">com.zving.advertise.properties.AdvertiseIsNeedAudit</div>
<svg class="a" style="left:96px;top:487px" width="17" height="17"><use href="#ext"/></svg>
<div class="t" style="left:117.5px;top:487px;letter-spacing:-0.098px;">com.zving.advertise.extend.AdvertiseCoreDataUser</div>
<svg class="a" style="left:96px;top:507px" width="17" height="17"><use href="#ext"/></svg>
<div class="t" style="left:117.5px;top:507px;letter-spacing:-0.063px;">com.zving.advertise.impl.AdvertiseDataType</div>
<svg class="a" style="left:96px;top:527px" width="17" height="17"><use href="#ext"/></svg>
<div class="t" style="left:117.5px;top:527px;letter-spacing:-0.093px;">com.zving.advertise.AdvertisePublishTask</div>
<svg class="a" style="left:96px;top:547px" width="17" height="17"><use href="#ext"/></svg>
<div class="t" style="left:117.5px;top:547px;letter-spacing:-0.097px;">com.zving.advertise.impl.AdvertisePCPublishTarget</div>
<svg class="a" style="left:96px;top:567px" width="17" height="17"><use href="#ext"/></svg>
<div class="t" style="left:117.5px;top:567px;letter-spacing:-0.059px;">com.zving.advertise.impl.AdvKeywordsStrategy</div>
<svg class="a" style="left:96px;top:587px" width="17" height="17"><use href="#ext"/></svg>
<div class="t" style="left:117.5px;top:587px;letter-spacing:-0.041px;">com.zving.advertise.impl.AdvWeightStrategy</div>
<div class="a" id="sbtrack" style="left:603px;top:226px;width:16px;height:376px;background:linear-gradient(90deg,#e6e6e6 0,#efefef 3px,#f3f3f3 8px,#eeeeee 16px)"></div>
<svg class="a" style="left:608px;top:232px" width="7" height="4"><path d="M0 4 H7 L3.5 0 Z" fill="#4a4a4a"/></svg>
<svg class="a" style="left:608px;top:592px" width="7" height="4"><path d="M0 0 H7 L3.5 4 Z" fill="#4a4a4a"/></svg>
<div class="a" id="sbthumb" style="left:603px;top:372px;width:15px;height:191px;border:1px solid #8e8e8e;border-radius:2px;background:linear-gradient(90deg,#f6f6f6 0,#ececed 42%,#d9dadc 50%,#cbccd0 80%,#d6d6d9 100%);box-shadow:inset 0 0 0 1px rgba(255,255,255,.8)"></div>
<svg class="a" style="left:607px;top:463px" width="8" height="9"><defs><linearGradient id="gl" x1="0" y1="0" x2="1" y2="0"><stop offset="0" stop-color="#3a3a3a"/><stop offset="1" stop-color="#8a8a8a"/></linearGradient></defs><rect x="0" y="0" width="8" height="1.2" fill="url(#gl)"/><rect x="0" y="1.2" width="8" height="1.1" fill="#fafafa"/><rect x="0" y="3" width="8" height="1.2" fill="url(#gl)"/><rect x="0" y="4.2" width="8" height="1.1" fill="#fafafa"/><rect x="0" y="6" width="8" height="1.2" fill="url(#gl)"/><rect x="0" y="7.2" width="8" height="1.1" fill="#fafafa"/></svg>
<div class="btn" style="left:625px;top:228px;width:48px;height:25px"></div>
<div class="t" style="left:637px;top:233px;letter-spacing:-0.047px;">Add</div>
<div class="btn" style="left:625px;top:260px;width:48px;height:25px"></div>
<div class="t" style="left:627px;top:265px;letter-spacing:-0.737px;">Remove</div>
<div class="btn" style="left:625px;top:312px;width:48px;height:25px"></div>
<div class="t" style="left:640px;top:317px;letter-spacing:0.188px;">Up</div>
<div class="btn" style="left:625px;top:344px;width:48px;height:25px"></div>
<div class="t" style="left:632.5px;top:349px;letter-spacing:-0.188px;">Down</div>
<div class="sec" style="left:698px;top:146px;width:651px"><b style="height:23px;background:linear-gradient(180deg,#e3eaf5 0,#eef2f9 12px,#ffffff 23px)"></b><i style="left:0"></i><i style="right:0"></i></div>
<div class="t" style="left:704px;top:150px;font-weight:bold;letter-spacing:0.027px;color:#214d7e">Extend Item details</div>
<div class="t" style="left:706px;top:170px;letter-spacing:0.088px;">Selected extend action's detail information</div>
<div class="t" style="left:709.4px;top:200px;letter-spacing:-0.336px;">ID:</div>
<div class="inp2" style="left:804px;top:199px;width:534px;height:23px"></div>
<div class="t" style="left:809.4px;top:203px;letter-spacing:-0.106px;">com.zving.advertise.AdvertisePriv</div>
<div class="t" style="left:709.5px;top:233px;letter-spacing:-0.280px;">Service ID:</div>
<div class="inp2" style="left:804px;top:232px;width:465px;height:23px"></div>
<div class="t" style="left:808.5px;top:236px;letter-spacing:-0.102px;">com.zving.platform.service.MenuPrivService</div>
<div class="btn" style="left:1275px;top:231px;width:62px;height:16px"></div>
<div class="t" style="left:1281px;top:232px;letter-spacing:-0.354px;">Browse...</div>
<div class="t" style="left:710.5px;top:267px;letter-spacing:-0.521px;color:#15156f"><u>Class:</u></div>
<div class="inp2" style="left:804px;top:265px;width:465px;height:23px"></div>
<div class="t" style="left:808.5px;top:269px;letter-spacing:-0.109px;">com.zving.advertise.AdvertisePriv</div>
<div class="btn" style="left:1275px;top:264px;width:62px;height:16px"></div>
<div class="t" style="left:1281px;top:265px;letter-spacing:-0.354px;">Browse...</div>
<div class="t" style="left:709.5px;top:299px;letter-spacing:-0.013px;">Description:</div>
<div class="inp2" style="left:804px;top:298px;width:522px;height:66px"></div>
<svg class="a" style="left:1328px;top:297px" width="15" height="17" viewBox="0 0 15 17"><path d="M0.5 0.5 H7.5 L10.5 3.5 V13.5 H0.5 Z" fill="#fffefa" stroke="#b7994f" stroke-width="1"/><path d="M7.5 0.5 V3.5 H10.5" fill="#f0e0b4" stroke="#b7994f" stroke-width=".8"/><rect x="2" y="4" width="6.5" height="7" fill="#e6f1fb" opacity=".8"/><path d="M4.3 3.2 Q3 3.4 3.2 5 Q3.4 6.4 2 6.6 Q3.4 6.8 3.2 8.2 Q3 9.9 4.3 10.1" fill="none" stroke="#2b4470" stroke-width="1.1"/><path d="M5.2 5.8 H8 M5.2 7.8 H8" stroke="#2b4470" stroke-width="1.1"/><path d="M5.5 10 H9.6 V8.2 L13.9 12 L9.6 15.8 V14 H5.5 Z" fill="#fbd45f" stroke="#c6962a" stroke-width=".9" stroke-linejoin="round"/><path d="M6.3 11 H10" stroke="#fff2b8" stroke-width="1"/></svg>
<div class="a" style="left:95px;top:673px;width:47px;height:22px;background:#fff;border:1px solid #8f8f8f;border-top:none;border-radius:0 0 3px 3px"></div>
<div class="a" style="left:188px;top:674px;width:1px;height:21px;background:#a3a3a3"></div>
<div class="a" style="left:221px;top:674px;width:1px;height:21px;background:#a3a3a3"></div>
<div class="t" style="left:38px;top:676px;letter-spacing:-0.223px;">Overview</div>
<div class="t" style="left:99.5px;top:676px;letter-spacing:-0.464px;">Extend</div>
<div class="t" style="left:146px;top:676px;letter-spacing:-0.106px;">Menus</div>
<div class="t" style="left:193px;top:676px;letter-spacing:-0.491px;">Files</div>
<div class="a" style="left:6px;top:701px;width:2px;height:2px;background:#b0b0b0"></div>
<div class="a" style="left:6px;top:705px;width:2px;height:2px;background:#b0b0b0"></div>
<div class="a" style="left:27px;top:704px;width:3px;height:2px;background:#e8c860;border-radius:2px 2px 0 0"></div>
<div class="a" style="left:46px;top:703px;width:6px;height:4px;border:1px solid #1f4a7a;border-bottom:none;background:#cfeaf8"></div>
<div class="a" style="left:53px;top:705px;width:5px;height:1px;background:#c5d3e4"></div>
<div class="a" style="left:870px;top:701px;width:2px;height:2px;background:#b0b0b0"></div>
<div class="a" style="left:870px;top:705px;width:2px;height:2px;background:#b0b0b0"></div>
<div class="a" style="left:1160px;top:700px;width:204px;height:8px;border:1px solid #b2b2b2;border-radius:4px 0 0 0;background:#f4f4f4;box-shadow:inset 1px 1px 0 #fff"></div>
<div class="a" style="left:1165px;top:703px;width:2px;height:2px;background:#a8a8a8"></div>
<div class="a" style="left:1273px;top:705px;width:2px;height:1px;background:#333"></div>
<div class="a" style="left:1297px;top:704px;width:3px;height:2px;background:#3c9a50"></div>
<div class="a" style="left:1323px;top:704px;width:4px;height:2px;background:#e0962c"></div>
</body>
</html>
